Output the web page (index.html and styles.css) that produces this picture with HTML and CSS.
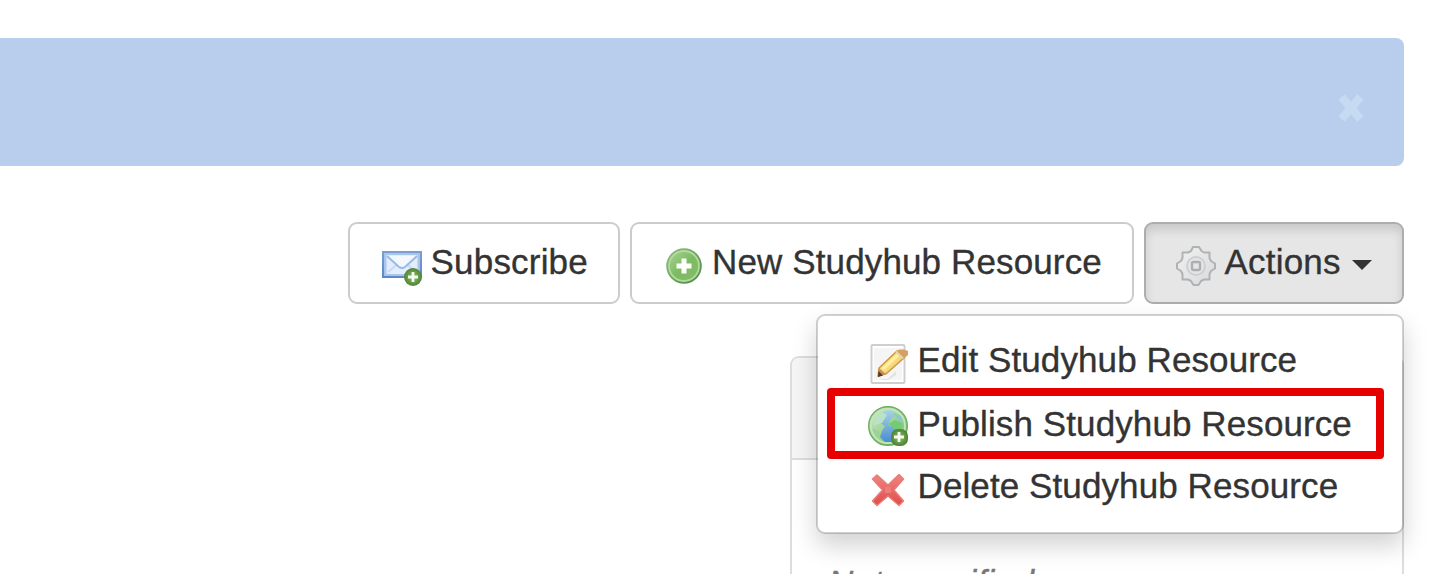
FILE: index.html
```html
<!DOCTYPE html>
<html lang="en">
<head>
<meta charset="utf-8">
<title>Studyhub Resource</title>
<link rel="stylesheet" href="styles.css">
</head>
<body>
<div class="alert">
  <svg class="close" viewBox="0 0 28 32"><path d="M4.500 5L23.500 27M23.500 5L4.500 27" stroke="#c6daf1" stroke-width="8.500"/></svg>
</div>
<div class="toolbar">
  <button class="btn">
    <svg class="icon" viewBox="0 0 40 40">
      <defs>
        <linearGradient id="mail" x1="0" y1="0" x2="0" y2="1"><stop offset="0" stop-color="#7c9fcd"/><stop offset="1" stop-color="#5c86c8"/></linearGradient>
        <radialGradient id="badge"><stop offset="0" stop-color="#93bd6b"/><stop offset="1" stop-color="#4d8535"/></radialGradient>
      </defs>
      <rect x="0" y="5" width="40" height="27" fill="url(#mail)"/>
      <rect x="2" y="7" width="36" height="23" fill="#a9c5ee"/>
      <rect x="4.500" y="9" width="31" height="19" fill="#e3edfd"/>
      <path d="M6 26L15 18.500M34 26L25 18.500" stroke="#c8daf5" stroke-width="2"/>
      <path d="M5 10H35L20 23Z" fill="#f3f7fe"/>
      <path d="M5 10L17 21Q20 23 23 21L35 10" fill="none" stroke="#9bb9e6" stroke-width="2"/>
      <circle cx="31" cy="31" r="9" fill="url(#badge)"/>
      <path d="M31 26V36M26 31H36" stroke="#f5faf0" stroke-width="2.800"/>
    </svg>
    <span>Subscribe</span>
  </button>
  <button class="btn btn-new">
    <svg class="icon" viewBox="0 0 40 40">
      <defs><linearGradient id="add" x1="0" y1="0" x2="1" y2="1"><stop offset="0" stop-color="#a8d394"/><stop offset=".5" stop-color="#7dbb62"/><stop offset="1" stop-color="#82bd68"/></linearGradient>
      <linearGradient id="rim" x1="0" y1="0" x2="1" y2="1"><stop offset="0" stop-color="#91c47f"/><stop offset="1" stop-color="#4b8940"/></linearGradient></defs>
      <circle cx="20" cy="20" r="17.800" fill="url(#rim)"/>
      <circle cx="20" cy="20" r="15" fill="url(#add)" stroke="#b2d99f" stroke-width="1.800"/>
      <path d="M20 12.500V27.500M12.500 20H27.500" stroke="#fff" stroke-width="5"/>
    </svg>
    <span>New Studyhub Resource</span>
  </button>
  <div class="dropdown">
    <button class="btn btn-active">
      <svg class="icon" viewBox="0 0 40 40">
        <defs><linearGradient id="gear" x1="0" y1="0" x2="1" y2="1"><stop offset="0" stop-color="#f0f1f1"/><stop offset="1" stop-color="#d8dadb"/></linearGradient></defs>
        <path d="M17 1H23L25.500 5L28 6.500H33.500V12L35 15L39 17.500V22.500L35 25L33.500 28V33.500H28L25 35L22.500 39H17.500L15 35L12 33.500H6.500V28L5 25L1 22.500V17.500L5 15L6.500 12V6.500H12L15 5Z" fill="url(#gear)" stroke="#b0b2b3" stroke-width="2" stroke-linejoin="round"/>
        <circle cx="20" cy="20" r="9" fill="#e4e5e6" stroke="#cdcfd0" stroke-width="2"/>
        <rect x="16" y="16" width="8" height="8" rx="1.500" fill="#e5e6e6" stroke="#adafb0" stroke-width="2.400"/>
      </svg>
      <span>Actions</span>
      <i class="caret"></i>
    </button>
    <ul class="menu">
      <li class="item">
        <svg class="icon" viewBox="0 0 40 40">
          <defs><linearGradient id="pencil" x1="0" y1="0" x2="1" y2="1"><stop offset="0" stop-color="#e7b34c"/><stop offset=".45" stop-color="#fce58a"/><stop offset="1" stop-color="#d99f3d"/></linearGradient></defs>
          <rect x="3.500" y="1" width="33" height="38" rx="1" fill="#fff" stroke="#cfcfcf" stroke-width="2"/>
          <rect x="6" y="4" width="28" height="32" fill="#f5f5f5"/>
          <path d="M12 33L14 35H20L28 27V31L20 36H14Z" fill="#e2e2e2"/>
          <path d="M11 24L29 7L36 14L18 30L10 32Z" fill="url(#pencil)" stroke="#ca923e" stroke-width="1.300"/>
          <path d="M15 25L31 10" stroke="#fdf0a0" stroke-width="3"/>
          <path d="M11 24L18 30L10 33Z" fill="#c98f58"/>
          <path d="M10.500 27L15 31.500L10 33Z" fill="#4e3928"/>
          <path d="M28 8L31 5.500H36L40 7V11L35 15.500Z" fill="#d5a160"/>
          <path d="M28 7.500L35 14.500" stroke="#ead2ad" stroke-width="2"/>
        </svg>
        <span>Edit Studyhub Resource</span>
      </li>
      <li class="item item-publish">
        <svg class="icon" viewBox="0 0 40 40">
          <defs><linearGradient id="land" x1="0" y1="0" x2="1" y2="1"><stop offset="0" stop-color="#d4edc7"/><stop offset="1" stop-color="#70b965"/></linearGradient>
          <linearGradient id="sea" x1="0" y1="0" x2="0" y2="1"><stop offset="0" stop-color="#a7d3e8"/><stop offset="1" stop-color="#498bcf"/></linearGradient></defs>
          <circle cx="20" cy="20" r="19.300" fill="url(#land)" stroke="#69ad60" stroke-width="1.400"/>
          <path d="M16 5L23 4L28 9L22 14L20 19L29 23L28 30L25 36L18 37L12 31L14 25L17 20L12 17L9 12Z" fill="url(#sea)"/>
          <path d="M7 12L14 6L19 9L14 17L6 19Z" fill="#bae2c9"/>
          <path d="M20 18L27 14L34 17L33 23L27 23Z" fill="#72cb78"/>
          <path d="M25 7L33 10L36 17L30 14Z" fill="#8bc9c6"/>
          <path d="M4 22L12 26L11 32L6 29Z" fill="#9bd29a"/>
          <circle cx="20" cy="20" r="17" fill="none" stroke="#c4e5b9" stroke-width="1.800"/>
          <rect x="23" y="23" width="17" height="17" rx="7" fill="url(#badge)"/>
          <path d="M31 26V36M26 31H36" stroke="#f5faf0" stroke-width="2.800"/>
        </svg>
        <span>Publish Studyhub Resource</span>
        <b class="highlight"></b>
      </li>
      <li class="item item-delete">
        <svg class="icon" viewBox="0 0 40 40">
          <defs><linearGradient id="del" x1="0" y1="0" x2="0" y2="1"><stop offset="0" stop-color="#ee8582"/><stop offset="1" stop-color="#e04c49"/></linearGradient></defs>
          <path d="M9 5L20 15L31 4.500L35.500 9L26 20L35.500 31L31 35.500L20 26L9 35.500L4.500 31L14.500 20L4.500 9Z" fill="url(#del)" stroke="#e97c79" stroke-width="1.500" stroke-linejoin="round"/>
          <rect x="17" y="17" width="6" height="6" fill="#f07c78"/>
        </svg>
        <span>Delete Studyhub Resource</span>
      </li>
    </ul>
  </div>
</div>
<section class="panel">
  <div class="panel-heading"></div>
  <div class="panel-body"><em>Not specified</em></div>
</section>
</body>
</html>
```
FILE: styles.css
```css
* { box-sizing: border-box; }
body {
  margin: 0;
  height: 574px;
  overflow: hidden;
  padding: 38px 34px 0 0;
  background: #fff;
  color: #333;
  font: 35px/50px "Liberation Sans", Arial, sans-serif;
  letter-spacing: 0.1px;
  -webkit-text-stroke: 0.35px currentColor;
}
.alert {
  display: flex;
  justify-content: flex-end;
  height: 128px;
  padding: 54px 39px 0 0;
  border-radius: 0 8px 8px 0;
  background: #b8ceec;
}
.close { width: 28px; height: 32px; }
.toolbar {
  display: flex;
  justify-content: flex-end;
  gap: 10px;
  margin-top: 56px;
}
.btn {
  display: flex;
  align-items: flex-start;
  gap: 8.5px;
  width: 272px;
  height: 82px;
  padding: 13px 0 0 32px;
  border: 2px solid #ccc;
  border-radius: 9px;
  background: #fff;
  color: inherit;
  font: inherit;
  letter-spacing: 0.2px;
  white-space: nowrap;
}
.btn-new { width: 504px; gap: 8px; letter-spacing: 0.13px; }
.btn-active {
  width: 260px;
  padding-left: 30px;
  border-color: #adadad;
  background: #e6e6e6;
  box-shadow: inset 0 6px 10px rgba(0, 0, 0, .125);
}
.icon { flex: none; width: 40px; height: 40px; margin-top: 9px; }
.caret {
  margin: 23px 0 0 3px;
  border: 10px solid transparent;
  border-top-color: #333;
  border-bottom: 0;
}
.dropdown { position: relative; }
.menu {
  position: absolute;
  z-index: 2;
  top: 92px;
  right: 0;
  width: 588px;
  height: 220px;
  margin: 0;
  padding: 12px 0;
  list-style: none;
  background: #fff;
  background-clip: padding-box;
  border: 2px solid rgba(0, 0, 0, .18);
  border-radius: 9px;
  box-shadow: 0 12px 24px rgba(0, 0, 0, .175);
}
.item {
  position: relative;
  display: flex;
  gap: 9.5px;
  height: 64px;
  padding-left: 50px;
  line-height: 64px;
  white-space: nowrap;
}
.item .icon { margin-top: 16px; }
.item-publish .icon { margin-top: 14px; }
.item-delete { height: 60px; line-height: 60px; }
.item-delete .icon { margin-top: 14px; }
.highlight {
  position: absolute;
  top: -4px;
  left: 9px;
  width: 557px;
  height: 71px;
  border: 8px solid #e60000;
  border-radius: 4px;
}
.panel {
  width: 614px;
  height: 218px;
  overflow: hidden;
  margin: 52px 0 0 auto;
  border: 2px solid #ddd;
  border-bottom: 0;
  border-radius: 9px 9px 0 0;
}
.panel-heading {
  height: 102px;
  border-bottom: 2px solid #ddd;
  background: #f5f5f5;
}
.panel-body { padding: 98px 36px 0; color: #777; letter-spacing: 0.3px; }
```
